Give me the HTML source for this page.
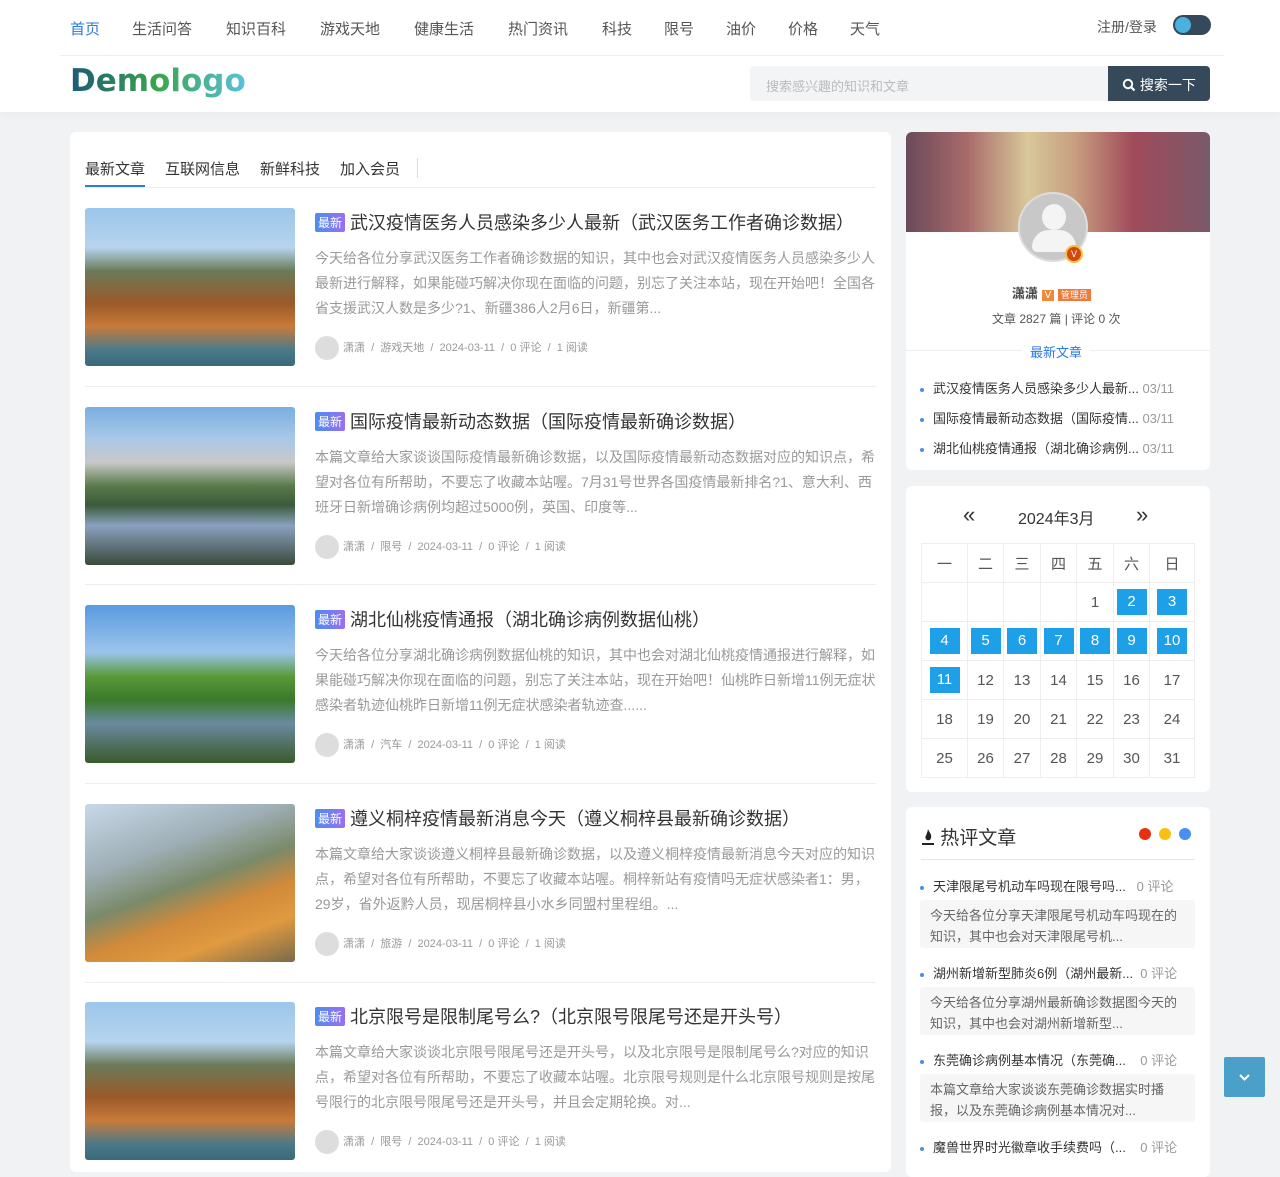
<!DOCTYPE html>
<html><head><meta charset="utf-8"><style>
*{margin:0;padding:0;box-sizing:border-box}
body{width:1280px;height:1167px;overflow:hidden;background:#f1f2f4;font-family:"Liberation Sans","Noto Sans CJK SC",sans-serif;color:#333;position:relative}
.hdr{position:absolute;left:0;top:0;width:1280px;height:112px;background:#fff;box-shadow:0 2px 8px rgba(0,0,0,.04)}
.nav{position:absolute;top:18px;left:70px;font-size:15px;color:#555}
.nav span{position:absolute;white-space:nowrap}
.hline{position:absolute;left:60px;top:55px;width:1164px;height:1px;background:#eee}
.logo{position:absolute;left:70px;top:63px;font-size:31px;font-weight:bold;background:linear-gradient(90deg,#1b5a7a,#3aa54a 50%,#5bc0de);-webkit-background-clip:text;color:transparent;font-family:"DejaVu Sans",sans-serif}
.search{position:absolute;left:750px;top:66px;width:358px;height:35px;background:#f3f4f6;border-radius:4px 0 0 4px;font-size:13px;color:#bbb;padding:10px 16px}
.sbtn{position:absolute;left:1108px;top:66px;width:102px;height:35px;background:#35495a;border-radius:0 4px 4px 0;color:#fff;font-size:14px;padding:9px 0 0 14px}
.card{position:absolute;background:#fff;border-radius:6px}
.tabs{position:absolute;left:85px;top:158px;font-size:15px;color:#333}
.tabs span{position:absolute;white-space:nowrap}
.art{position:absolute;left:85px;width:791px;height:158px}
.art .img{position:absolute;left:0;top:0;width:210px;height:158px;border-radius:3px;overflow:hidden}
.art h3{position:absolute;left:230px;top:1px;font-size:18px;font-weight:normal;color:#333;white-space:nowrap}
.art h3 b{display:inline-block;font-size:12px;font-weight:normal;color:#fff;background:linear-gradient(90deg,#4a8ef0,#9b6ff0);padding:1px 3px;margin-right:5px;vertical-align:2px;border-radius:2px}
.art p{position:absolute;left:230px;top:38px;width:562px;font-size:14px;line-height:25px;color:#999}
.art .meta{position:absolute;left:230px;top:128px;font-size:11px;color:#999;white-space:nowrap}
.av{display:inline-block;width:24px;height:24px;border-radius:50%;background:#ddd;vertical-align:middle;margin-right:4px}
.sep{position:absolute;left:85px;width:791px;height:1px;background:#eee}
.li{position:absolute;left:920px;font-size:13px;color:#333;white-space:nowrap}
.li i{display:inline-block;width:4px;height:4px;border-radius:50%;background:#4a8ee0;margin-right:9px;vertical-align:middle}
.li em{font-style:normal;color:#999}
.cal{position:absolute;left:921px;top:544px;border-collapse:collapse;font-size:15px;color:#555}
.cal td{border:1px solid #eee;height:39px;text-align:center}
.cal td.b span{display:inline-block;width:30px;height:26px;line-height:26px;background:#1ea0e8;color:#fff}
.ex{position:absolute;left:920px;width:275px;background:#f6f6f7;font-size:13px;color:#666;line-height:21px;padding:5px 10px;border-radius:3px}
</style></head><body>
<div class="hdr">
<div class="nav">
<span style="left:0;color:#2a7ae2">首页</span><span style="left:62px">生活问答</span><span style="left:156px">知识百科</span><span style="left:250px">游戏天地</span><span style="left:344px">健康生活</span><span style="left:438px">热门资讯</span><span style="left:532px">科技</span><span style="left:594px">限号</span><span style="left:656px">油价</span><span style="left:718px">价格</span><span style="left:780px">天气</span>
</div>
<div style="position:absolute;left:1097px;top:17px;font-size:14px;color:#555">注册/登录</div>
<div style="position:absolute;left:1173px;top:15px;width:38px;height:20px;border-radius:10px;background:#35495a"><div style="position:absolute;left:2px;top:2px;width:16px;height:16px;border-radius:50%;background:#4ab0e0"></div></div>
<div class="hline"></div>
<div class="logo">Demologo</div>
<div class="search">搜索感兴趣的知识和文章</div>
<div class="sbtn"><svg width="14" height="14" viewBox="0 0 14 14" style="vertical-align:-2px"><circle cx="6" cy="6" r="4.2" fill="none" stroke="#fff" stroke-width="2"/><path d="M9 9l3.5 3.5" stroke="#fff" stroke-width="2.2"/></svg> 搜索一下</div>
</div>

<div class="card" style="left:70px;top:132px;width:821px;height:1040px"></div>
<div class="tabs"><span style="left:0">最新文章</span><span style="left:80px">互联网信息</span><span style="left:175px">新鲜科技</span><span style="left:255px">加入会员</span></div>
<div style="position:absolute;left:85px;top:185px;width:60px;height:2px;background:#2a7ae2"></div>
<div style="position:absolute;left:417px;top:158px;width:1px;height:20px;background:#ddd"></div>
<div class="sep" style="top:187px"></div>

<div class="art" style="top:208px"><div class="img" style="background:linear-gradient(180deg,#9cc6ea 0,#b6d4ee 25%,#6a7a58 40%,#9a5a2a 60%,#c87a3a 75%,#4a7a8a 90%,#3a6a7a)"></div>
<h3><b>最新</b>武汉疫情医务人员感染多少人最新（武汉医务工作者确诊数据）</h3>
<p>今天给各位分享武汉医务工作者确诊数据的知识，其中也会对武汉疫情医务人员感染多少人最新进行解释，如果能碰巧解决你现在面临的问题，别忘了关注本站，现在开始吧！全国各省支援武汉人数是多少?1、新疆386人2月6日，新疆第...</p>
<div class="meta"><span class="av"></span>潇潇 &nbsp;/&nbsp; 游戏天地 &nbsp;/&nbsp; 2024-03-11 &nbsp;/&nbsp; 0 评论 &nbsp;/&nbsp; 1 阅读</div></div>
<div class="sep" style="top:386px"></div>

<div class="art" style="top:407px"><div class="img" style="background:linear-gradient(180deg,#7aaee0 0,#a8c8e8 20%,#c8c8c8 35%,#5a7a4a 50%,#3a5a3a 62%,#8aa0c0 75%,#3a4a3a)"></div>
<h3><b>最新</b>国际疫情最新动态数据（国际疫情最新确诊数据）</h3>
<p>本篇文章给大家谈谈国际疫情最新确诊数据，以及国际疫情最新动态数据对应的知识点，希望对各位有所帮助，不要忘了收藏本站喔。7月31号世界各国疫情最新排名?1、意大利、西班牙日新增确诊病例均超过5000例，英国、印度等...</p>
<div class="meta"><span class="av"></span>潇潇 &nbsp;/&nbsp; 限号 &nbsp;/&nbsp; 2024-03-11 &nbsp;/&nbsp; 0 评论 &nbsp;/&nbsp; 1 阅读</div></div>
<div class="sep" style="top:584px"></div>

<div class="art" style="top:605px"><div class="img" style="background:linear-gradient(180deg,#5a9ae0 0,#9cc4ec 30%,#5a9a3a 45%,#3a7a2a 60%,#6a8aa0 75%,#3a5a2a)"></div>
<h3><b>最新</b>湖北仙桃疫情通报（湖北确诊病例数据仙桃）</h3>
<p>今天给各位分享湖北确诊病例数据仙桃的知识，其中也会对湖北仙桃疫情通报进行解释，如果能碰巧解决你现在面临的问题，别忘了关注本站，现在开始吧！仙桃昨日新增11例无症状感染者轨迹仙桃昨日新增11例无症状感染者轨迹查......</p>
<div class="meta"><span class="av"></span>潇潇 &nbsp;/&nbsp; 汽车 &nbsp;/&nbsp; 2024-03-11 &nbsp;/&nbsp; 0 评论 &nbsp;/&nbsp; 1 阅读</div></div>
<div class="sep" style="top:783px"></div>

<div class="art" style="top:804px"><div class="img" style="background:linear-gradient(160deg,#c8d8e8 0,#a0b0b8 30%,#7a8a6a 50%,#d08a3a 65%,#e09a40 80%,#7a6a4a)"></div>
<h3><b>最新</b>遵义桐梓疫情最新消息今天（遵义桐梓县最新确诊数据）</h3>
<p>本篇文章给大家谈谈遵义桐梓县最新确诊数据，以及遵义桐梓疫情最新消息今天对应的知识点，希望对各位有所帮助，不要忘了收藏本站喔。桐梓新站有疫情吗无症状感染者1：男，29岁，省外返黔人员，现居桐梓县小水乡同盟村里程组。...</p>
<div class="meta"><span class="av"></span>潇潇 &nbsp;/&nbsp; 旅游 &nbsp;/&nbsp; 2024-03-11 &nbsp;/&nbsp; 0 评论 &nbsp;/&nbsp; 1 阅读</div></div>
<div class="sep" style="top:982px"></div>

<div class="art" style="top:1002px"><div class="img" style="background:linear-gradient(180deg,#9cc6ea 0,#b6d4ee 25%,#6a7a58 40%,#9a5a2a 60%,#c87a3a 75%,#4a7a8a 90%,#3a6a7a)"></div>
<h3><b>最新</b>北京限号是限制尾号么?（北京限号限尾号还是开头号）</h3>
<p>本篇文章给大家谈谈北京限号限尾号还是开头号，以及北京限号是限制尾号么?对应的知识点，希望对各位有所帮助，不要忘了收藏本站喔。北京限号规则是什么北京限号规则是按尾号限行的北京限号限尾号还是开头号，并且会定期轮换。对...</p>
<div class="meta"><span class="av"></span>潇潇 &nbsp;/&nbsp; 限号 &nbsp;/&nbsp; 2024-03-11 &nbsp;/&nbsp; 0 评论 &nbsp;/&nbsp; 1 阅读</div></div>

<!-- sidebar profile -->
<div class="card" style="left:906px;top:132px;width:304px;height:338px;overflow:hidden">
<div style="height:100px;background:linear-gradient(90deg,#6a4a5a,#a86a6a 20%,#d8c89a 40%,#c8a080 55%,#a04a5a 75%,#7a5a6a)"></div></div>
<div style="position:absolute;left:1018px;top:192px;width:70px;height:70px;border-radius:50%;background:#c8c8c8;border:2px solid #ddd"><div style="position:absolute;left:22px;top:10px;width:24px;height:26px;border-radius:50%;background:#f4f4f4"></div><div style="position:absolute;left:12px;top:36px;width:44px;height:22px;border-radius:20px 20px 6px 6px;background:#f4f4f4"></div></div>
<div style="position:absolute;left:1065px;top:245px;width:18px;height:18px;border-radius:50%;background:#d04a10;border:2px solid #f8c040;color:#fff;font-size:9px;text-align:center;line-height:14px">V</div>
<div style="position:absolute;left:1012px;top:283px;font-size:13px;font-weight:bold;color:#444">潇潇 <span style="background:#f08a3a;color:#fff;font-size:10px;padding:0 3px;font-weight:normal">V</span> <span style="background:#f07a3a;color:#fff;font-size:9px;padding:1px 3px;font-weight:normal">管理员</span></div>
<div style="position:absolute;left:992px;top:310px;font-size:12px;color:#555">文章 2827 篇 | 评论 0 次</div>
<div style="position:absolute;left:906px;top:350px;width:304px;height:1px;background:#eee"></div>
<div style="position:absolute;left:1022px;top:342px;padding:0 8px;background:#fff;font-size:13px;color:#2a7ae2">最新文章</div>
<div class="li" style="top:378px"><i></i>武汉疫情医务人员感染多少人最新... <em>03/11</em></div>
<div class="li" style="top:408px"><i></i>国际疫情最新动态数据（国际疫情... <em>03/11</em></div>
<div class="li" style="top:438px"><i></i>湖北仙桃疫情通报（湖北确诊病例... <em>03/11</em></div>

<!-- calendar -->
<div class="card" style="left:906px;top:486px;width:304px;height:306px"></div>
<div style="position:absolute;left:963px;top:502px;font-size:22px;color:#333">«</div>
<div style="position:absolute;left:1018px;top:505px;font-size:16px;color:#333">2024年3月</div>
<div style="position:absolute;left:1136px;top:502px;font-size:22px;color:#333">»</div>
<table class="cal" style="top:543px">
<tr><td style="width:46px">一</td><td style="width:36px">二</td><td style="width:37px">三</td><td style="width:36px">四</td><td style="width:37px">五</td><td style="width:36px">六</td><td style="width:45px">日</td></tr>
<tr><td></td><td></td><td></td><td></td><td>1</td><td class="b"><span>2</span></td><td class="b"><span>3</span></td></tr>
<tr><td class="b"><span>4</span></td><td class="b"><span>5</span></td><td class="b"><span>6</span></td><td class="b"><span>7</span></td><td class="b"><span>8</span></td><td class="b"><span>9</span></td><td class="b"><span>10</span></td></tr>
<tr><td class="b"><span>11</span></td><td>12</td><td>13</td><td>14</td><td>15</td><td>16</td><td>17</td></tr>
<tr><td>18</td><td>19</td><td>20</td><td>21</td><td>22</td><td>23</td><td>24</td></tr>
<tr><td>25</td><td>26</td><td>27</td><td>28</td><td>29</td><td>30</td><td>31</td></tr>
</table>

<!-- hot -->
<div class="card" style="left:906px;top:807px;width:304px;height:370px"></div>
<div style="position:absolute;left:921px;top:823px;font-size:19px;color:#333"><svg width="14" height="18" viewBox="0 0 14 18" style="vertical-align:-2px"><path d="M7 1C8 4 11 6 10 10C9.5 13 5 13 4.5 10C4 8 6 7 7 1Z" fill="#222"/><rect x="1" y="15" width="12" height="2" fill="#222"/></svg> 热评文章</div>
<div style="position:absolute;left:1139px;top:828px;width:12px;height:12px;border-radius:50%;background:#e8300e"></div>
<div style="position:absolute;left:1159px;top:828px;width:12px;height:12px;border-radius:50%;background:#f8c010"></div>
<div style="position:absolute;left:1179px;top:828px;width:12px;height:12px;border-radius:50%;background:#4a8ef0"></div>
<div style="position:absolute;left:921px;top:859px;width:274px;height:1px;background:#e4e4e4"></div>
<div class="li" style="top:876px"><i></i>天津限尾号机动车吗现在限号吗... &nbsp;&nbsp;<em>0 评论</em></div>
<div class="ex" style="top:900px;height:48px">今天给各位分享天津限尾号机动车吗现在的知识，其中也会对天津限尾号机...</div>
<div class="li" style="top:963px"><i></i>湖州新增新型肺炎6例（湖州最新... &nbsp;<em>0 评论</em></div>
<div class="ex" style="top:987px;height:48px">今天给各位分享湖州最新确诊数据图今天的知识，其中也会对湖州新增新型...</div>
<div class="li" style="top:1050px"><i></i>东莞确诊病例基本情况（东莞确... &nbsp;&nbsp;&nbsp;<em>0 评论</em></div>
<div class="ex" style="top:1074px;height:48px">本篇文章给大家谈谈东莞确诊数据实时播报，以及东莞确诊病例基本情况对...</div>
<div class="li" style="top:1137px"><i></i>魔兽世界时光徽章收手续费吗（... &nbsp;&nbsp;&nbsp;<em>0 评论</em></div>

<div style="position:absolute;left:1224px;top:1057px;width:41px;height:40px;background:#4aa0c8;border-radius:2px"><svg width="41" height="40" viewBox="0 0 41 40"><path d="M16 18l4.5 4.5L25 18" fill="none" stroke="#fff" stroke-width="2"/></svg></div>
</body></html>
